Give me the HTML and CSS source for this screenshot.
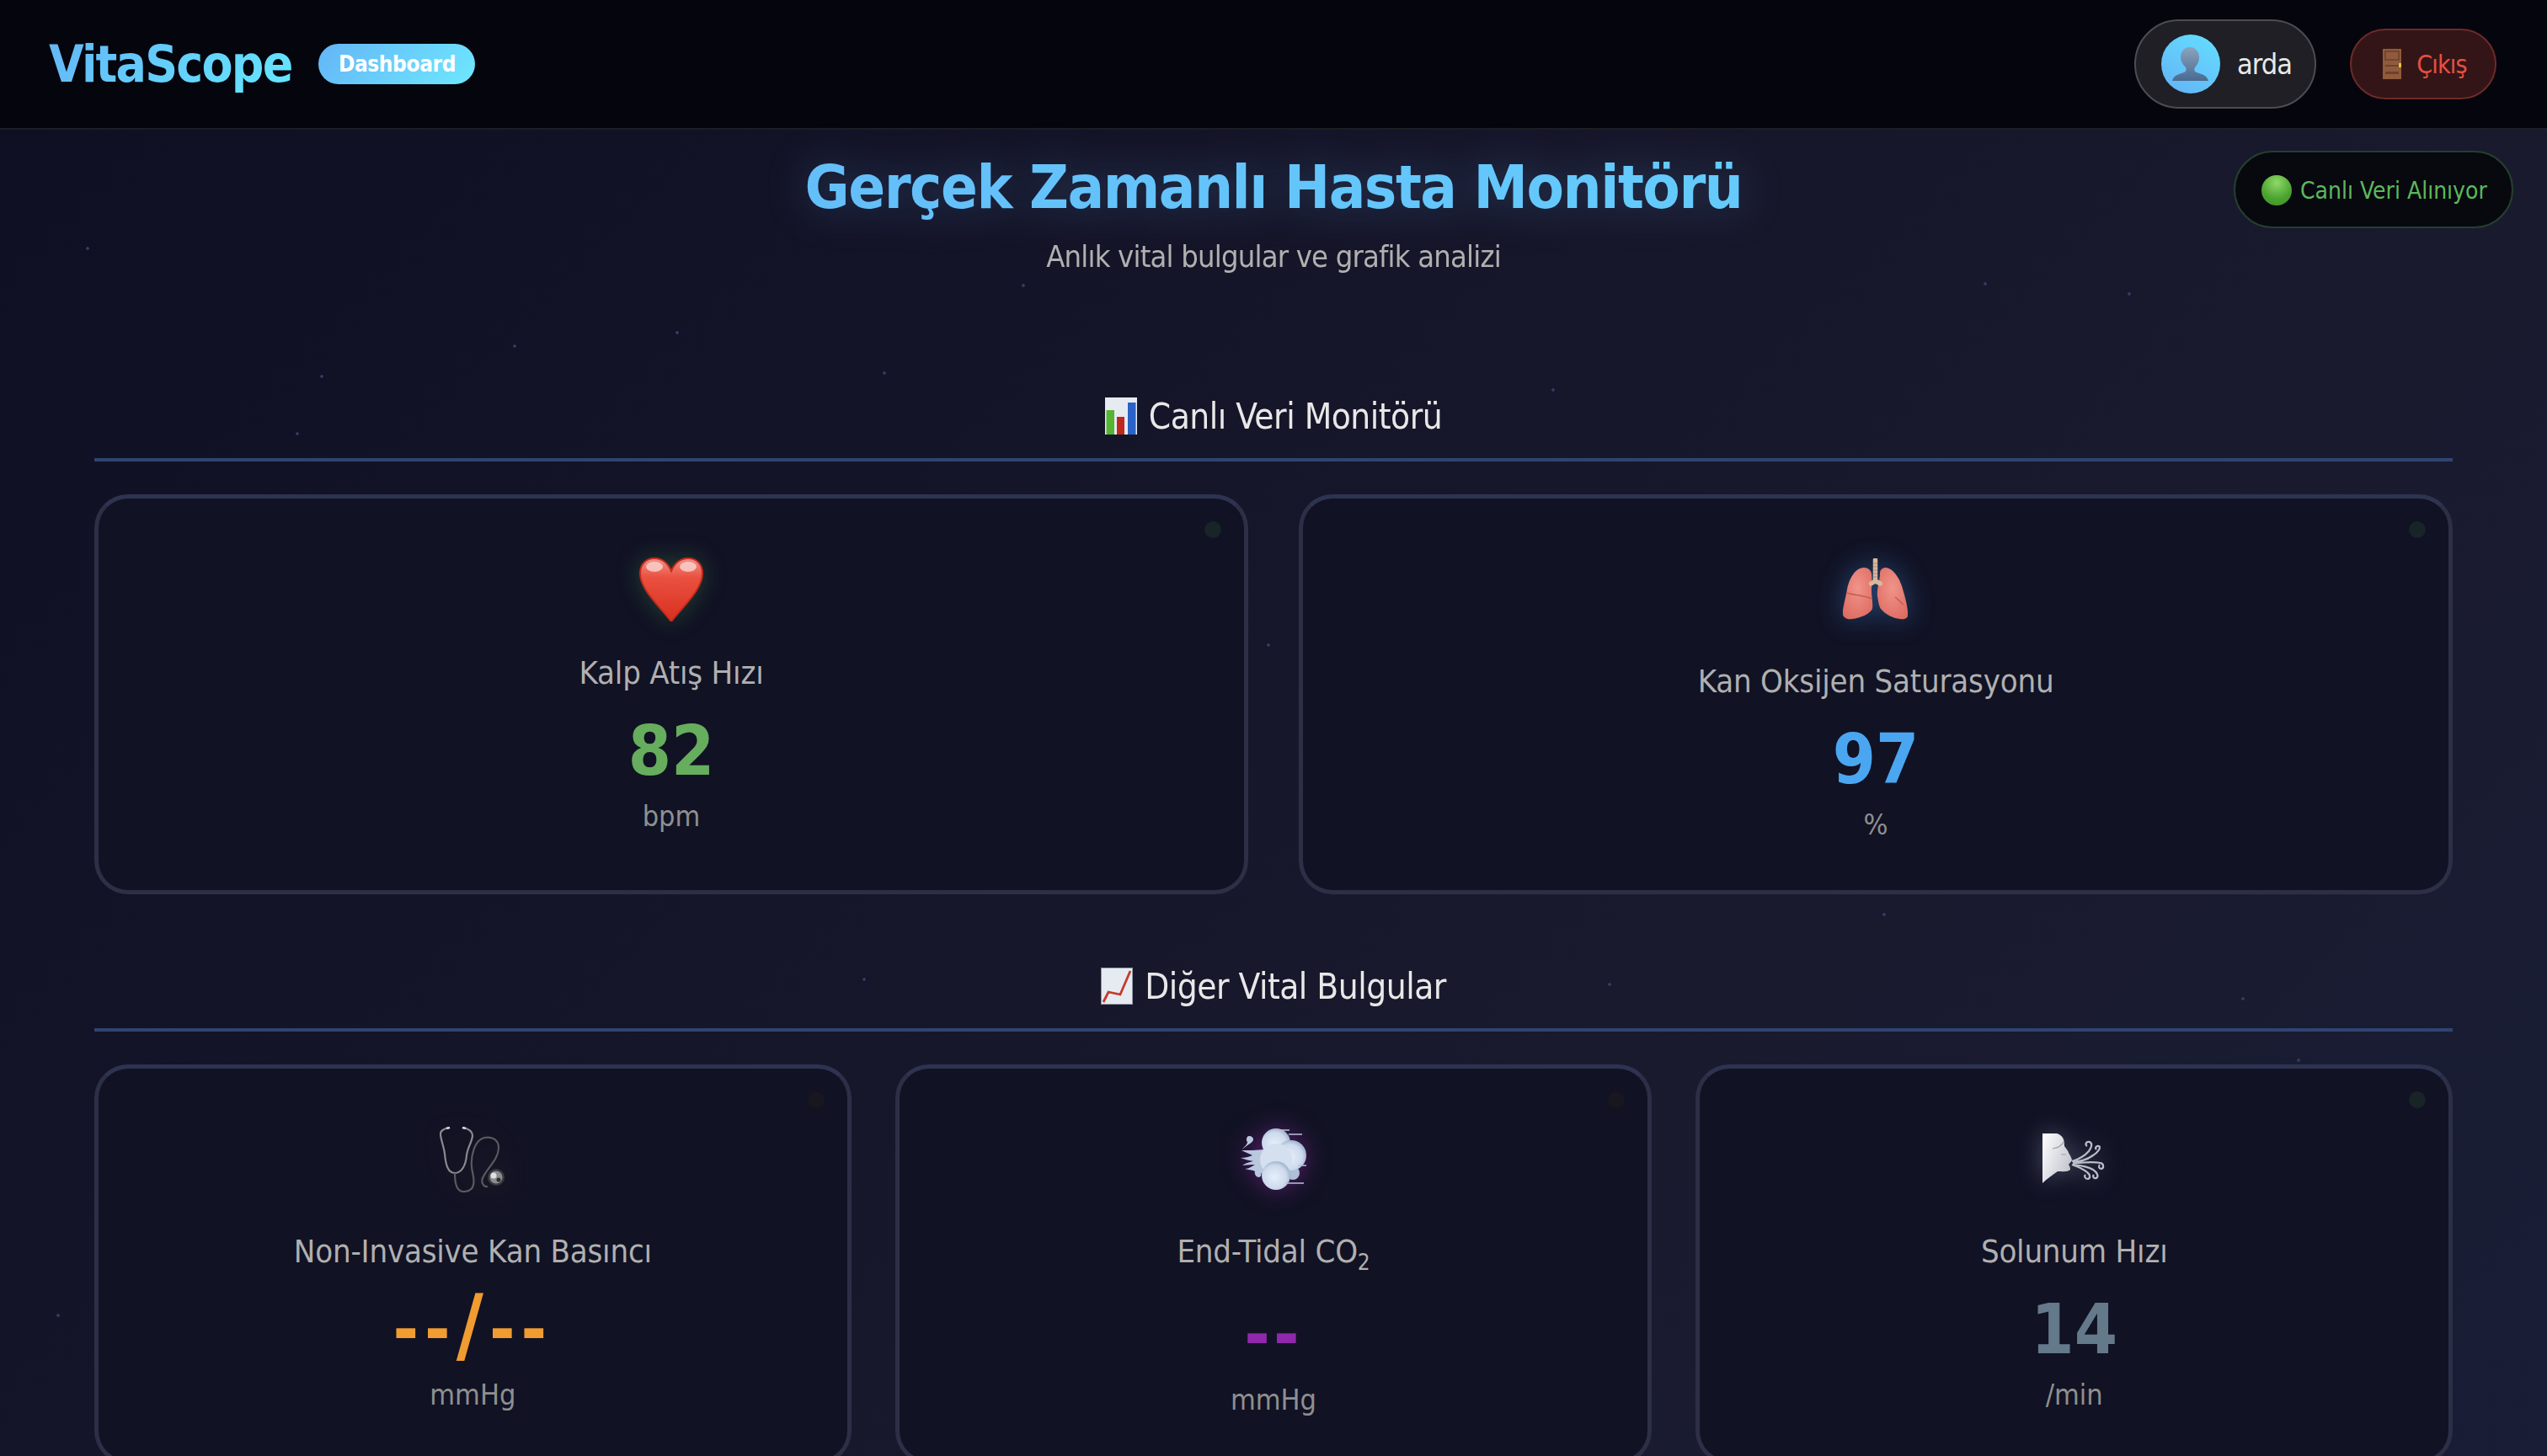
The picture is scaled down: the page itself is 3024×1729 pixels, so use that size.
FILE: index.html
```html
<!DOCTYPE html>
<html lang="tr">
<head>
  <meta charset="UTF-8">
  <meta name="viewport" content="width=device-width, initial-scale=1.0">
  <title>VitaScope - Dashboard</title>
  <link rel="stylesheet" href="styles.css">
</head>
<body>
  <header class="topbar">
    <div class="brand">
      <span class="logo">VitaScope</span>
      <span class="badge">Dashboard</span>
    </div>
    <div class="user-area">
      <div class="user-pill">
        <svg class="avatar" viewBox="0 0 70 70">
          <defs>
            <linearGradient id="avBg" x1="0.2" y1="1" x2="0.8" y2="0">
              <stop offset="0" stop-color="#64b5f6"/>
              <stop offset="1" stop-color="#64dcff"/>
            </linearGradient>
            <linearGradient id="avBust" x1="0" y1="0" x2="0" y2="1">
              <stop offset="0" stop-color="#8ba3bd"/>
              <stop offset="1" stop-color="#4a6a90"/>
            </linearGradient>
          </defs>
          <circle cx="35" cy="35" r="35" fill="url(#avBg)"/>
          <path d="M34 15c7 0 11 6 11 12 0 5-2 9-5 12-1 2-1 5 2 6 6 2 12 3 14 10H13c2-7 8-8 14-10 3-1 3-4 2-6-3-3-6-7-6-12 0-6 4-12 11-12z" fill="url(#avBust)"/>
        </svg>
        <span class="user-name">arda</span>
      </div>
      <div class="logout">
        <svg class="door" viewBox="0 0 22 36">
          <rect width="22" height="36" fill="#8f5b3c"/>
          <rect x="3" y="3" width="16" height="10" fill="none" stroke="#6d422a" stroke-width="1.5"/>
          <rect x="3" y="19" width="16" height="2" fill="#6d422a"/>
          <rect x="3" y="27" width="16" height="3" fill="#6d422a"/>
          <rect x="19" y="17" width="3" height="5" fill="#e8c33f"/>
        </svg>
        <span>Çıkış</span>
      </div>
    </div>
  </header>

  <main class="content">
    <div class="live-status">
      <span class="live-dot"></span>
      <span>Canlı Veri Alınıyor</span>
    </div>

    <div class="page-head">
      <h1>Gerçek Zamanlı Hasta Monitörü</h1>
      <p>Anlık vital bulgular ve grafik analizi</p>
    </div>

    <section class="section">
      <h2>
        <svg class="title-icon" viewBox="0 0 38 44">
          <rect width="38" height="44" fill="#e6ebf1"/>
          <rect x="1.5" y="15" width="9.5" height="29" fill="#55b532"/>
          <rect x="14" y="23" width="9" height="21" fill="#c0281e"/>
          <rect x="27" y="6" width="9.5" height="38" fill="#2a62c8"/>
        </svg>
        Canlı Veri Monitörü
      </h2>
      <div class="grid grid-two">
        <div class="card">
          <span class="card-dot dot-on"></span>
          <div class="card-icon icon-heart">
            <svg viewBox="0 0 76 76" width="76" height="76">
              <defs>
                <linearGradient id="heartFill" x1="0" y1="0" x2="0" y2="1">
                  <stop offset="0" stop-color="#f0938a"/>
                  <stop offset="0.3" stop-color="#ea5140"/>
                  <stop offset="1" stop-color="#d92f1f"/>
                </linearGradient>
              </defs>
              <path d="M38 76C24 58 1 38 1 19 1 7 9 1 18 1c9 0 16 6 20 15C42 7 49 1 58 1c9 0 17 6 17 18 0 19-23 39-37 57z" fill="url(#heartFill)" stroke="#c62a1c" stroke-width="2"/>
              <ellipse cx="18" cy="11" rx="10" ry="6" fill="#fbdcd8" opacity="0.75"/>
              <ellipse cx="58" cy="11" rx="10" ry="6" fill="#fbdcd8" opacity="0.75"/>
            </svg>
          </div>
          <div class="card-label">Kalp Atış Hızı</div>
          <div class="card-value green">82</div>
          <div class="card-unit">bpm</div>
        </div>
        <div class="card">
          <span class="card-dot dot-on"></span>
          <div class="card-icon icon-lungs">
            <svg viewBox="0 0 78 74" width="78" height="74">
              <defs>
                <radialGradient id="lungFill" cx="0.5" cy="0.4" r="0.7">
                  <stop offset="0" stop-color="#f0948a"/>
                  <stop offset="1" stop-color="#dd6a60"/>
                </radialGradient>
              </defs>
              <path d="M25 11c5 0 8 3 9 7 1 6 0 13 0 20 0 8 2 15 1 22-3 6-14 11-24 12-5 1-10-1-11-5-1-6 3-18 5-30 2-11 9-26 20-26z" fill="url(#lungFill)"/>
              <path d="M50 11c-4 1-6 3-6 7 0 9-4 18-3 27 1 6 2 12 4 15 6 7 14 11 23 12 5 1 9-1 9-4 1-7-3-22-7-35-3-10-11-22-20-22z" fill="url(#lungFill)"/>
              <path d="M5 41c8 3 20 3 29 7M62 46c3 2 6 6 10 9" fill="none" stroke="#c95d54" stroke-width="1.5"/>
              <path d="M38.5 2v25M38.5 27l-5 3M38.5 27l6 3" fill="none" stroke="#d8b79e" stroke-width="5.5" stroke-linecap="round"/>
              <path d="M36 6h5M36 10h5M36 14h5M36 18h5M36 22h5" stroke="#a98f7b" stroke-width="1"/>
            </svg>
          </div>
          <div class="card-label">Kan Oksijen Saturasyonu</div>
          <div class="card-value blue">97</div>
          <div class="card-unit">%</div>
        </div>
      </div>
    </section>

    <section class="section">
      <h2>
        <svg class="title-icon" viewBox="0 0 38 44">
          <rect width="38" height="44" fill="#e6ebf1"/>
          <rect x="0.5" y="0.5" width="37" height="43" fill="none" stroke="#8e97a6"/>
          <path d="M3 41L9 29l14 3L35 4" fill="none" stroke="#c63a2a" stroke-width="2.8"/>
        </svg>
        Diğer Vital Bulgular
      </h2>
      <div class="grid grid-three">
        <div class="card">
          <span class="card-dot"></span>
          <div class="card-icon icon-steth">
            <svg viewBox="0 0 78 78" width="78" height="78" fill="none">
              <path d="M12 1C5 2 0 5 1 10c1 7 4 14 5 22 1 11 3 23 12 23 8 0 13-9 14-21 1-9 6-15 7-23 0-6-6-9-12-10" stroke="#8a8a90" stroke-width="2.2"/>
              <path d="M12 1l-4 1M27 1l4 1" stroke="#d4d4d8" stroke-width="2.6"/>
              <path d="M18 55c0 10 2 22 10 22 7 0 11-3 12-8 2-9-2-15-2-22-1-12 3-31 15-34 10-2 17 3 17 12 0 14-14 24-19 36-2 5 1 11 6 10" stroke="#5a5a60" stroke-width="2.2"/>
              <circle cx="67" cy="60" r="10" fill="#3a3a40"/>
              <circle cx="67" cy="60" r="7.5" fill="#8c8c90"/>
              <circle cx="64" cy="58" r="3.5" fill="#e0e0e4"/>
              <circle cx="70" cy="63" r="2.5" fill="#2c2c30"/>
            </svg>
          </div>
          <div class="card-label">Non-Invasive Kan Basıncı</div>
          <div class="card-value orange">--<span class="slash">/</span>--</div>
          <div class="card-unit">mmHg</div>
        </div>
        <div class="card">
          <span class="card-dot"></span>
          <div class="card-icon icon-dash">
            <svg viewBox="0 0 78 74" width="78" height="74">
              <defs>
                <radialGradient id="dashFill" cx="0.45" cy="0.55" r="0.55">
                  <stop offset="0" stop-color="#e6effa"/>
                  <stop offset="0.75" stop-color="#cddaec"/>
                  <stop offset="1" stop-color="#a4b5d0"/>
                </radialGradient>
              </defs>
              <path d="M10 9c3 0 5 2 5 4 0 4-7 6-13 12 3-4 6-6 6-9-2-2-1-7 2-7zM30 24c-6 2-17 2-29 2 6 3 10 4 13 6-4 2-9 3-14 3 5 2 11 3 15 4-4 1-9 2-13 5 6-1 10-1 15-1-4 2-7 5-12 5 7 2 9 1 12 3-1 3 1 6 4 7 3 0 4-3 3-5 4 1 8 1 12-2z" fill="#b9c8df"/>
              <circle cx="62" cy="53" r="8" fill="#aebfd8"/>
              <circle cx="42" cy="17" r="17" fill="url(#dashFill)"/>
              <circle cx="60" cy="32" r="18" fill="url(#dashFill)"/>
              <circle cx="42" cy="37" r="19" fill="#d4e0f0"/>
              <circle cx="42" cy="56" r="17" fill="url(#dashFill)"/>
              <path d="M46 2h12M57 7h16M53 65h22M68 44h10" stroke="#b6c4dc" stroke-width="1.6"/>
            </svg>
          </div>
          <div class="card-label">End-Tidal CO<sub>2</sub></div>
          <div class="card-value purple">--</div>
          <div class="card-unit">mmHg</div>
        </div>
        <div class="card">
          <span class="card-dot dot-on"></span>
          <div class="card-icon icon-wind">
            <svg viewBox="0 0 76 68" width="76" height="68">
              <defs>
                <linearGradient id="faceFill" x1="0" y1="0" x2="1" y2="0.6">
                  <stop offset="0" stop-color="#ffffff"/>
                  <stop offset="1" stop-color="#c4c6d0"/>
                </linearGradient>
              </defs>
              <path d="M0 0c8-1 18-1 21 2 5 3 5 9 5 13 2 3 5 6 5 8 2 3 4 7 4 9-1 2-3 3-4 5 2 2 2 5 2 6-3 3-9 2-15 2C12 49 5 54 0 59z" fill="url(#faceFill)"/>
              <path d="M12 18c6-1 11-3 13-8M22 25h6" fill="none" stroke="#9c9eaa" stroke-width="1.2"/>
              <path d="M35 33c7-2 14-5 20-12 3-4 5-9 1-11-4-1-6 3-3 5M36 34c8-1 16-2 24-8 5-3 10-9 7-11-3-1-5 2-3 4M36 35c10 0 22-2 33 0 4 1 4 6 1 7-3 0-4-3-2-5M36 37c8 1 18 2 24 6 5 3 7 8 4 10-3 1-5-2-3-4M35 37c6 2 13 5 18 9 4 3 4 7 1 8-3 0-5-3-3-5" fill="none" stroke="#babec9" stroke-width="2.2"/>
            </svg>
          </div>
          <div class="card-label">Solunum Hızı</div>
          <div class="card-value slate">14</div>
          <div class="card-unit">/min</div>
        </div>
      </div>
    </section>
  </main>
</body>
</html>
```

FILE: styles.css
```css
* { box-sizing: border-box; margin: 0; padding: 0; }
html, body { height: 100%; overflow: hidden; }
body {
  font-family: "DejaVu Sans Condensed", "DejaVu Sans", sans-serif;
  font-stretch: condensed;
  color: #e8e8e8;
  background: linear-gradient(135deg, #0f0f23 0%, #1a1a2e 50%, #16213e 100%) no-repeat;
  background-size: 100% 3400px;
}

/* faint stars behind everything */
body::before {
  content: "";
  position: fixed;
  inset: 0;
  background-image:
    radial-gradient(circle at 104px 295px, #2f3f66 1.5px, transparent 2px),
    radial-gradient(circle at 382px 447px, #2f3f66 1.5px, transparent 2px),
    radial-gradient(circle at 611px 411px, #2f3f66 1.5px, transparent 2px),
    radial-gradient(circle at 804px 395px, #2f3f66 1.5px, transparent 2px),
    radial-gradient(circle at 353px 515px, #2f3f66 1.5px, transparent 2px),
    radial-gradient(circle at 1215px 339px, #2f3f66 1.5px, transparent 2px),
    radial-gradient(circle at 1050px 443px, #2f3f66 1.5px, transparent 2px),
    radial-gradient(circle at 1844px 463px, #2f3f66 1.5px, transparent 2px),
    radial-gradient(circle at 2357px 337px, #2f3f66 1.5px, transparent 2px),
    radial-gradient(circle at 2528px 349px, #2f3f66 1.5px, transparent 2px),
    radial-gradient(circle at 2237px 1086px, #2f3f66 1.5px, transparent 2px),
    radial-gradient(circle at 1026px 1163px, #2f3f66 1.5px, transparent 2px),
    radial-gradient(circle at 1911px 1169px, #2f3f66 1.5px, transparent 2px),
    radial-gradient(circle at 2663px 1186px, #2f3f66 1.5px, transparent 2px),
    radial-gradient(circle at 2729px 1259px, #2f3f66 1.5px, transparent 2px),
    radial-gradient(circle at 69px 1562px, #2f3f66 1.5px, transparent 2px),
    radial-gradient(circle at 1506px 766px, #2f3f66 1.5px, transparent 2px);
  pointer-events: none;
}

.topbar {
  position: relative;
  height: 154px;
  display: flex;
  justify-content: space-between;
  align-items: center;
  padding: 0 60px 0 58px;
  background: #05050d;
  border-bottom: 2px solid #1e1e26;
}
.brand { display: flex; align-items: center; gap: 32px; }
.logo {
  font-size: 60px;
  letter-spacing: -1.8px;
  font-weight: 700;
  background: linear-gradient(135deg, #64b5f6, #64e8ff);
  -webkit-background-clip: text;
  background-clip: text;
  color: transparent;
}
.badge {
  width: 186px;
  height: 48px;
  display: flex;
  align-items: center;
  justify-content: center;
  border-radius: 24px;
  font-size: 26px;
  letter-spacing: -0.4px;
  font-weight: 700;
  color: #fff;
  background: linear-gradient(135deg, #64b5f6, #6ee8ff);
}
.user-area { display: flex; align-items: center; gap: 40px; }
.user-pill {
  width: 216px;
  height: 106px;
  display: flex;
  align-items: center;
  gap: 20px;
  padding-left: 30px;
  border: 2px solid #4c4c52;
  border-radius: 53px;
  background: #1f1f25;
}
.avatar { width: 70px; height: 70px; }
.user-name { font-size: 34px; letter-spacing: -1px; color: #e8e8e8; }
.logout {
  width: 174px;
  height: 84px;
  display: flex;
  align-items: center;
  justify-content: center;
  gap: 18px;
  padding-left: 4px;
  border: 2px solid #6e2a26;
  border-radius: 42px;
  background: #331518;
  font-size: 30px;
  letter-spacing: -0.8px;
  color: #e8503f;
}
.door { width: 22px; height: 36px; }

.content { position: relative; padding: 0 112px; }
.live-status {
  position: absolute;
  top: 25px;
  right: 40px;
  width: 332px;
  height: 92px;
  display: flex;
  align-items: center;
  gap: 10px;
  padding: 2px 0 0 31px;
  border: 2px solid #253f2c;
  border-radius: 46px;
  background: #08080f;
  font-size: 28px;
  color: #5cb85c;
}
.live-dot {
  width: 36px;
  height: 36px;
  border-radius: 50%;
  background: radial-gradient(circle at 50% 25%, #8fd86a, #4aa32e 60%, #3f8f27);
}

.page-head { text-align: center; padding-top: 25px; }
.page-head h1 {
  font-size: 72px;
  letter-spacing: -1.5px;
  line-height: 86px;
  font-weight: 700;
  background: linear-gradient(90deg, #64b5f6, #64d4ff);
  -webkit-background-clip: text;
  background-clip: text;
  color: transparent;
  filter: drop-shadow(0 0 24px rgba(100, 181, 246, 0.25));
}
.page-head p {
  margin-top: 18px;
  font-size: 36px;
  letter-spacing: -0.8px;
  line-height: 44px;
  color: #b0b0b0;
}

.section { margin-top: 133px; }
.section + .section { margin-top: 75px; }
.section h2 {
  display: flex;
  align-items: center;
  justify-content: center;
  gap: 14px;
  height: 88px;
  padding-bottom: 16px;
  font-size: 42px;
  letter-spacing: -0.5px;
  font-weight: 400;
  color: #e8e8e8;
  border-bottom: 4px solid #2f4470;
}
.title-icon { width: 38px; height: 44px; }

.grid { display: grid; margin-top: 39px; }
.grid-two { grid-template-columns: 1fr 1fr; gap: 60px; }
.grid-three { grid-template-columns: repeat(3, 1fr); gap: 52px; }
.card {
  position: relative;
  height: 475px;
  padding-top: 68px;
  text-align: center;
  background: #111224;
  border: 5px solid #2d2f47;
  border-top-color: #2d3350;
  border-radius: 40px;
}
.card-dot {
  position: absolute;
  top: 27px;
  right: 27px;
  width: 20px;
  height: 20px;
  border-radius: 50%;
  background: #18171f;
}
.dot-on { background: #182428; }

.card-icon {
  height: 80px;
  display: flex;
  align-items: center;
  justify-content: center;
}
.icon-heart { filter: drop-shadow(0 0 14px rgba(76, 175, 80, 0.3)); margin-bottom: -10px; }
.icon-lungs { filter: drop-shadow(0 0 16px rgba(70, 150, 230, 0.4)); }
.icon-steth { filter: drop-shadow(0 0 16px rgba(255, 170, 80, 0.12)); }
.icon-dash { filter: drop-shadow(0 0 14px rgba(156, 39, 176, 0.5)); }
.icon-wind { filter: drop-shadow(0 0 14px rgba(200, 210, 240, 0.3)); padding-top: 6px; }

.card-label {
  margin-top: 44px;
  font-size: 38px;
  letter-spacing: -0.2px;
  line-height: 50px;
  color: #b0b0b0;
}
.card-label sub { font-size: 26px; line-height: 36px; }
.card-value {
  margin-top: 22px;
  font-size: 82px;
  line-height: 92px;
  font-weight: 700;
}
.card-unit {
  margin-top: 9px;
  font-size: 34px;
  line-height: 44px;
  color: #8f8f8f;
}
.green { color: #66ad5e; }
.blue { color: #4aa6f0; }
.orange { color: #f09c30; letter-spacing: 7px; }
.purple { color: #9028ac; letter-spacing: 4px; }
.slate { color: #64798a; }
.slash { font-size: 98px; line-height: 0; }
```
